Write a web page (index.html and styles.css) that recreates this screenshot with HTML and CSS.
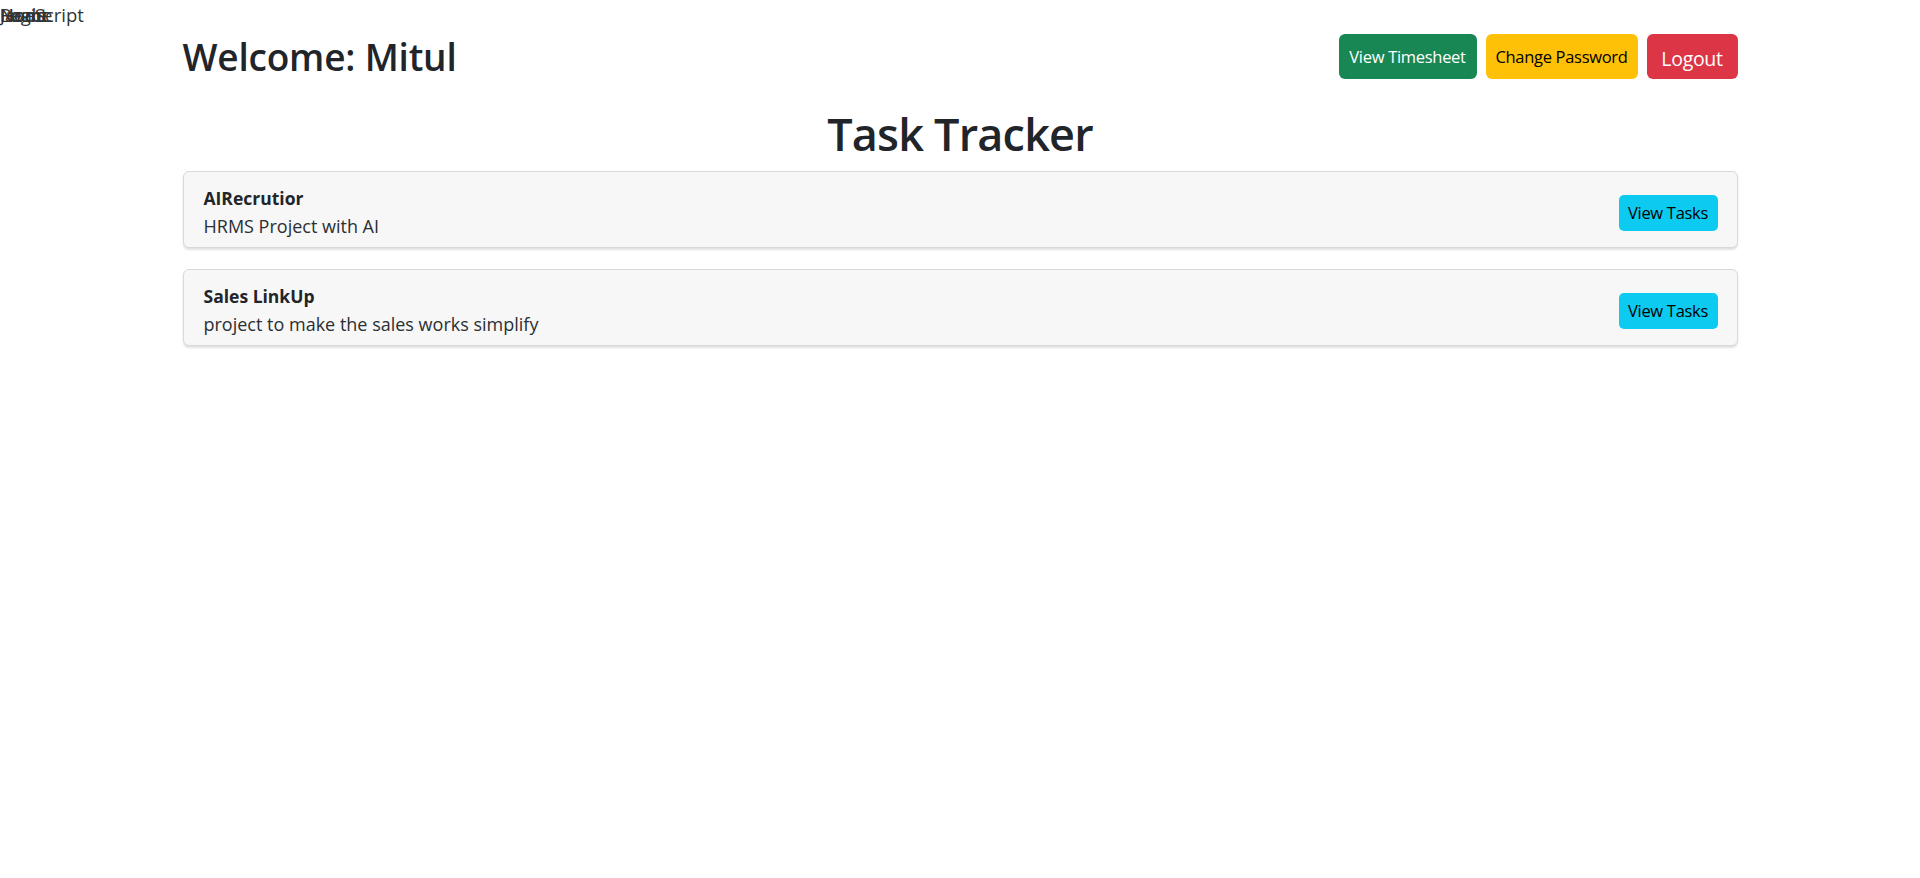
FILE: index.html
```html
<!DOCTYPE html>
<html lang="en">
<head>
<meta charset="utf-8">
<title>Task Tracker</title>
<link rel="stylesheet" href="styles.css">
</head>
<body>
<div class="ghost">
  <span class="ghost-item">Home</span>
  <span class="ghost-item">Login</span>
  <span class="ghost-item">React</span>
  <span class="ghost-item">Node</span>
  <span class="ghost-item">JavaScript</span>
</div>
<div class="page">
  <header class="header">
    <h2 class="welcome">Welcome: Mitul</h2>
    <div class="actions">
      <button class="btn btn-green">View Timesheet</button>
      <button class="btn btn-yellow">Change Password</button>
      <button class="btn btn-red">Logout</button>
    </div>
  </header>
  <h1 class="title">Task Tracker</h1>
  <div class="card">
    <div class="card-text">
      <div class="card-title">AIRecrutior</div>
      <div class="card-desc">HRMS Project with AI</div>
    </div>
    <button class="btn btn-cyan">View Tasks</button>
  </div>
  <div class="card">
    <div class="card-text">
      <div class="card-title">Sales LinkUp</div>
      <div class="card-desc">project to make the sales works simplify</div>
    </div>
    <button class="btn btn-cyan">View Tasks</button>
  </div>
</div>
</body>
</html>
```
FILE: styles.css
```css
html, body {
  margin: 0;
  padding: 0;
  background: #ffffff;
}
body {
  font-family: "Open Sans", "Noto Sans", sans-serif;
  color: #212529;
  font-size: 18px;
}
.ghost {
  position: absolute;
  left: 0;
  top: 3px;
  font-size: 18.5px;
  color: #333;
}
.ghost-item {
  position: absolute;
  left: 0;
  top: 0;
  white-space: nowrap;
  line-height: 24px;
}
.page {
  width: 1555px;
  margin: 0 auto;
  padding-top: 34px;
}
.header {
  display: flex;
  justify-content: space-between;
  align-items: center;
  height: 45px;
}
.welcome {
  margin: 0;
  font-size: 37px;
  font-weight: 600;
  line-height: 45px;
  letter-spacing: -0.2px;
}
.actions {
  display: flex;
  gap: 9px;
}
.btn {
  border: 1px solid transparent;
  font-family: inherit;
  cursor: pointer;
  border-radius: 6px;
  padding: 0;
  height: 45px;
  font-size: 16.5px;
  letter-spacing: -0.3px;
  white-space: nowrap;
  text-align: center;
}
.btn-green {
  background: #198754;
  color: #fff;
  width: 138px;
}
.btn-yellow {
  background: #ffc107;
  color: #000;
  width: 152px;
}
.btn-red {
  background: #dc3545;
  color: #fff;
  width: 91px;
  font-size: 19.5px;
  padding-top: 4px;
}
.title {
  margin: 25px 0 7px;
  text-align: center;
  font-size: 45px;
  font-weight: 600;
  line-height: 60px;
  letter-spacing: -0.8px;
}
.card {
  display: flex;
  justify-content: space-between;
  align-items: center;
  background: #f7f7f7;
  border: 1px solid #d9d9d9;
  border-radius: 6px;
  box-shadow: 0 2px 2px rgba(0, 0, 0, 0.12);
  padding: 13px 19px 6px 20px;
  margin-bottom: 21px;
}
.card-title {
  font-weight: 700;
  font-size: 17.5px;
  line-height: 27px;
}
.card-desc {
  font-size: 18px;
  line-height: 29px;
  color: #2b2f33;
}
.btn-cyan {
  background: #0dcaf0;
  color: #000;
  height: 36px;
  width: 99px;
  border-radius: 5px;
  font-size: 16.5px;
  margin-top: -1px;
}
```
